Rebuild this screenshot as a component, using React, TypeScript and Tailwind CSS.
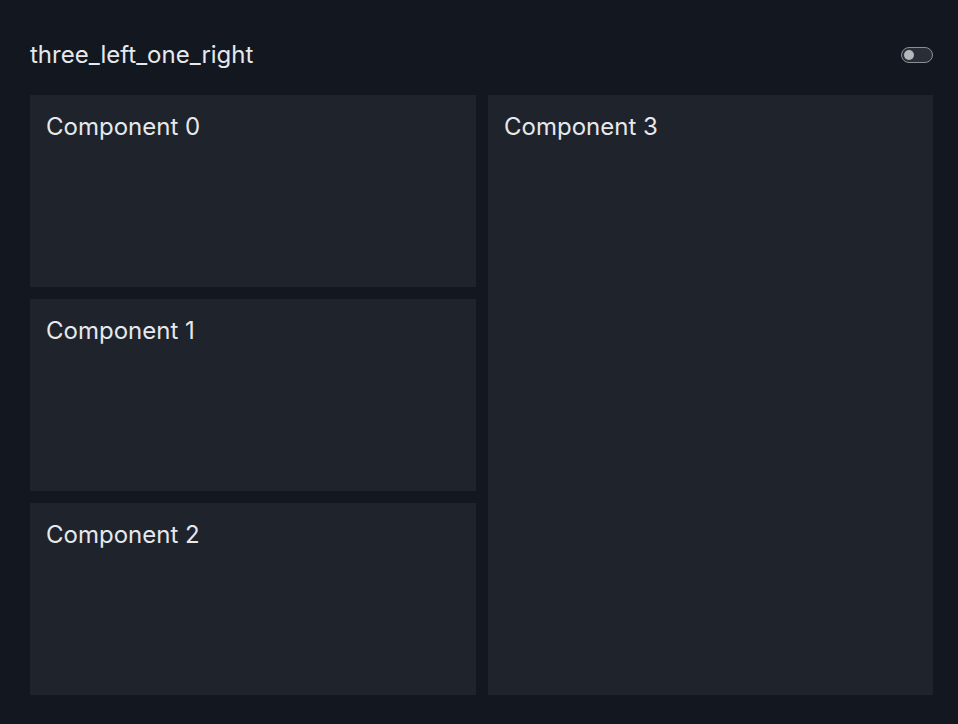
import React, { useState } from 'react';

function Panel({ title, className = '' }: { title: string; className?: string }) {
  return (
    <div className={`bg-[#1f232b] p-4 ${className}`}>
      <h3 className="text-[24px] leading-[32px] text-[#e6e8eb]">{title}</h3>
    </div>
  );
}

export default function App() {
  const [on, setOn] = useState(false);

  return (
    <div
      className="w-[958px] h-[724px] bg-[#131820] pl-[30px] pr-[25px] pt-[39px] pb-[29px] flex flex-col"
      style={{ fontFamily: 'Inter, "Noto Sans", sans-serif' }}
    >
      <div className="flex items-center justify-between h-[32px] mb-[24px]">
        <h2 className="text-[24px] leading-[32px] text-[#e6e8eb]">three_left_one_right</h2>
        <button
          onClick={() => setOn(!on)}
          className="w-[32px] h-[16px] rounded-full border border-[#8a8f97] bg-[#2a2e36] flex items-center px-[2px]"
        >
          <span className={`w-[10px] h-[10px] rounded-full bg-[#b4b7bc] ${on ? 'ml-auto' : ''}`} />
        </button>
      </div>
      <div className="flex-1 grid grid-cols-[446px_445px] gap-[12px]">
        <div className="grid grid-rows-3 gap-[12px]">
          <Panel title="Component 0" />
          <Panel title="Component 1" />
          <Panel title="Component 2" />
        </div>
        <Panel title="Component 3" />
      </div>
    </div>
  );
}
